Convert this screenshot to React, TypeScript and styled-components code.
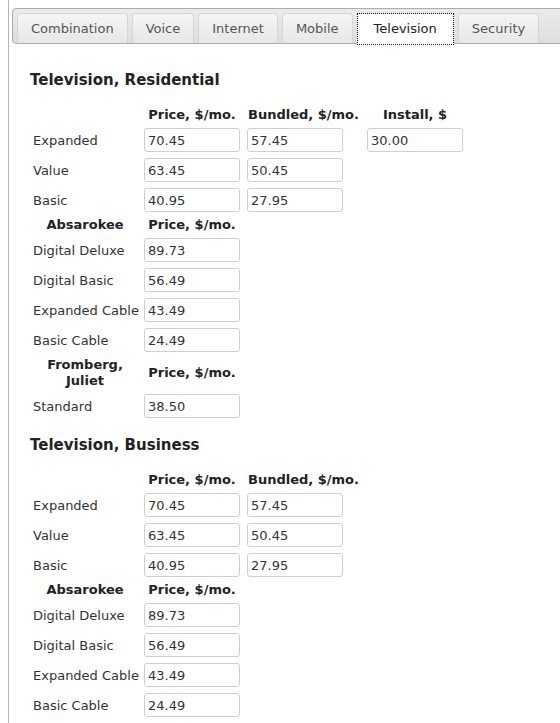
import styled, { createGlobalStyle } from "styled-components";

const GlobalStyle = createGlobalStyle`
  html, body {
    margin: 0;
    padding: 0;
    background: #ffffff;
    overflow-x: hidden;
  }
  body {
    font-family: "DejaVu Sans", Verdana, sans-serif;
    font-size: 13px;
    color: #333333;
  }
`;

type Row = { label: string; values: string[] };
type Group = { name: string; cols: string[]; rows: Row[] };
type Section = { title: string; groups: Group[] };

const tabs = ["Combination", "Voice", "Internet", "Mobile", "Television", "Security"];

const sections: Section[] = [
  {
    title: "Television, Residential",
    groups: [
      {
        name: "",
        cols: ["Price, $/mo.", "Bundled, $/mo.", "Install, $"],
        rows: [
          { label: "Expanded", values: ["70.45", "57.45", "30.00"] },
          { label: "Value", values: ["63.45", "50.45"] },
          { label: "Basic", values: ["40.95", "27.95"] },
        ],
      },
      {
        name: "Absarokee",
        cols: ["Price, $/mo."],
        rows: [
          { label: "Digital Deluxe", values: ["89.73"] },
          { label: "Digital Basic", values: ["56.49"] },
          { label: "Expanded Cable", values: ["43.49"] },
          { label: "Basic Cable", values: ["24.49"] },
        ],
      },
      {
        name: "Fromberg, Juliet",
        cols: ["Price, $/mo."],
        rows: [{ label: "Standard", values: ["38.50"] }],
      },
    ],
  },
  {
    title: "Television, Business",
    groups: [
      {
        name: "",
        cols: ["Price, $/mo.", "Bundled, $/mo."],
        rows: [
          { label: "Expanded", values: ["70.45", "57.45"] },
          { label: "Value", values: ["63.45", "50.45"] },
          { label: "Basic", values: ["40.95", "27.95"] },
        ],
      },
      {
        name: "Absarokee",
        cols: ["Price, $/mo."],
        rows: [
          { label: "Digital Deluxe", values: ["89.73"] },
          { label: "Digital Basic", values: ["56.49"] },
          { label: "Expanded Cable", values: ["43.49"] },
          { label: "Basic Cable", values: ["24.49"] },
        ],
      },
    ],
  },
];

const App = () => {
  return (
    <>
      <GlobalStyle />
      <Panel>
        <TabBar>
          {tabs.map((t) => (
            <Tab key={t} $active={t === "Television"}>
              {t}
            </Tab>
          ))}
        </TabBar>
        <Content>
          {sections.map((s) => (
            <section key={s.title}>
              <Heading>{s.title}</Heading>
              {s.groups.map((g, gi) => (
                <div key={gi}>
                  <HeadRow>
                    <HeadCell>{g.name}</HeadCell>
                    {g.cols.map((c, ci) => (
                      <HeadCell key={ci} $nowrap>
                        {c}
                      </HeadCell>
                    ))}
                  </HeadRow>
                  {g.rows.map((r) => (
                    <DataRow key={r.label}>
                      <Label>{r.label}</Label>
                      {r.values.map((v, vi) => (
                        <Cell key={vi}>
                          <PriceInput defaultValue={v} />
                        </Cell>
                      ))}
                    </DataRow>
                  ))}
                </div>
              ))}
            </section>
          ))}
        </Content>
      </Panel>
    </>
  );
};

const Panel = styled.div`
  margin-left: 8px;
  border-left: 1px solid #b4b4b4;
  min-height: 100vh;
  padding-top: 8px;
  box-sizing: border-box;
`;

const TabBar = styled.div`
  margin-left: 3px;
  width: 640px;
  height: 36px;
  box-sizing: border-box;
  border: 1px solid #acacac;
  border-radius: 4px;
  padding: 4px 4px 0;
  display: flex;
  gap: 4px;
  background: linear-gradient(#ebebeb, #dedede);
`;

const Tab = styled.div<{ $active?: boolean }>`
  height: ${(p) => (p.$active ? "32px" : "30px")};
  box-sizing: border-box;
  padding: 0 ${(p) => (p.$active ? "16px" : "13px")};
  padding-bottom: ${(p) => (p.$active ? "2px" : "0")};
  display: flex;
  align-items: center;
  border: ${(p) => (p.$active ? "1px dotted #111" : "1px solid #d6d6d6")};
  border-bottom: ${(p) => (p.$active ? "1px dotted #111" : "none")};
  border-radius: ${(p) => (p.$active ? "0" : "4px 4px 0 0")};
  background: ${(p) =>
    p.$active ? "#ffffff" : "linear-gradient(#f5f5f5, #e7e7e7)"};
  color: ${(p) => (p.$active ? "#222222" : "#555555")};
  font-size: 13px;
  white-space: nowrap;
`;

const Content = styled.div`
  padding: 27px 0 0 21px;
  display: flex;
  flex-direction: column;
  gap: 15px;
`;

const Heading = styled.h2`
  margin: 0 0 16px;
  font-size: 15px;
  line-height: 18px;
  font-weight: bold;
  color: #222222;
`;

const HeadRow = styled.div`
  margin-left: 3px;
  display: grid;
  grid-template-columns: 104px 96px 113px 96px;
  column-gap: 7px;
  align-items: center;
`;

const DataRow = styled(HeadRow)`
  height: 30px;
`;

const HeadCell = styled.div<{ $nowrap?: boolean }>`
  padding: 2px 0;
  line-height: 16px;
  font-weight: bold;
  text-align: center;
  color: #222222;
  white-space: ${(p) => (p.$nowrap ? "nowrap" : "normal")};
`;

const Label = styled.div`
  white-space: nowrap;
  color: #333333;
`;

const Cell = styled.div`
  display: flex;
`;

const PriceInput = styled.input`
  width: 96px;
  height: 24px;
  box-sizing: border-box;
  border: 1px solid #cfcfcf;
  border-radius: 3px;
  padding: 0 3px;
  font-family: "DejaVu Sans", Verdana, sans-serif;
  font-size: 13px;
  color: #333333;
  background: #ffffff;
  outline: none;
`;

export default App;
